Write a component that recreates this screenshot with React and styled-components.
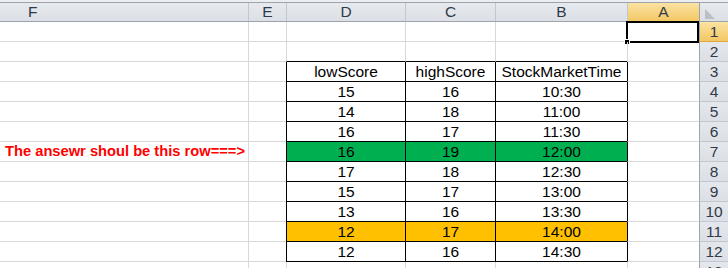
import styled, { createGlobalStyle } from "styled-components"

const GlobalStyle = createGlobalStyle`
    html, body {
        margin:0;
        padding:0;
        background:#FFFFFF;
    }
    body{
        font-family:"Liberation Sans", Arial, sans-serif;
    }
`

const COLS = "248px 38px 119px 90px 132px 72px 29px"
const GRID = "#D9D9D9"
const INK = "#000000"

const letras = ['F', 'E', 'D', 'C', 'B', 'A']

const dados = [
    { linha: 3, valores: ['lowScore', 'highScore', 'StockMarketTime'] },
    { linha: 4, valores: ['15', '16', '10:30'] },
    { linha: 5, valores: ['14', '18', '11:00'] },
    { linha: 6, valores: ['16', '17', '11:30'] },
    { linha: 7, valores: ['16', '19', '12:00'], fill: '#00B050', nota: 'The ansewr shoul be this row===>' },
    { linha: 8, valores: ['17', '18', '12:30'] },
    { linha: 9, valores: ['15', '17', '13:00'] },
    { linha: 10, valores: ['13', '16', '13:30'] },
    { linha: 11, valores: ['12', '17', '14:00'], fill: '#FFC000' },
    { linha: 12, valores: ['12', '16', '14:30'] },
]

export default function App() {
    const linhas = []
    for (let n = 1; n <= 13; n++) {
        const d = dados.find(e => e.linha === n)
        const naTabela = !!d
        const acimaTabela = n === 2
        linhas.push(
            <Row key={n}>
                <Cell $first $under={GRID} $align="flex-end">
                    {d && d.nota ? <Note>{d.nota}</Note> : null}
                </Cell>
                <Cell $edge={GRID} $under={GRID} />
                {[0, 1, 2].map(i => (
                    <Cell key={i}
                        $edge={naTabela ? INK : GRID}
                        $under={naTabela || acimaTabela ? INK : GRID}
                        $fill={d && d.fill}>
                        {d ? d.valores[i] : null}
                    </Cell>
                ))}
                <Cell $edge={naTabela ? INK : GRID} $under={GRID}>
                    {n === 1 ? <Selection><Handle /></Selection> : null}
                </Cell>
                <RowHead $active={n === 1}>{n}</RowHead>
            </Row>
        )
    }

    return (
        <Sheet>
            <GlobalStyle />
            <TopStrip />
            <HeadRow>
                {letras.map(l => (
                    <ColHead key={l} $active={l === 'A'} $first={l === 'F'}>
                        {l}
                    </ColHead>
                ))}
                <Corner>
                    <svg width="10" height="10" viewBox="0 0 10 10">
                        <path d="M0 0 L10 10 L0 10 Z" fill="#B9BFC7" />
                    </svg>
                </Corner>
            </HeadRow>
            {linhas}
        </Sheet>
    )
}

const Sheet = styled.div`
    width:728px;
    height:268px;
    overflow:hidden;
    background:#FFFFFF;
    color:#000000;
`
const TopStrip = styled.div`
    height:2px;
    background:#ECEEF1;
`
const HeadRow = styled.div`
    display:grid;
    grid-template-columns:${COLS};
    height:20px;
    box-sizing:border-box;
    border-top:1px solid #9DA3AA;
    border-bottom:1px solid #9DA3AA;
`
const ColHead = styled.div`
    display:flex;
    align-items:center;
    justify-content:${props => props.$first ? 'flex-start' : 'center'};
    padding-left:${props => props.$first ? '28px' : '0'};
    border-left:${props => props.$first ? 'none' : '1px solid #C2C8D0'};
    background:${props => props.$active
        ? 'linear-gradient(#FBE3A2, #F3C764)'
        : 'linear-gradient(#E6E9EE, #DCE0E6)'};
    color:#2F3B48;
    font-size:15.5px;
    line-height:18px;
`
const Corner = styled.div`
    display:flex;
    align-items:flex-start;
    padding:6px 0 0 5px;
    box-sizing:border-box;
    border-left:1px solid #9DA3AA;
    background:linear-gradient(#E6E9EE, #DCE0E6);
`
const Row = styled.div`
    display:grid;
    grid-template-columns:${COLS};
    height:20px;
`
const Cell = styled.div`
    position:relative;
    box-sizing:border-box;
    display:flex;
    align-items:center;
    justify-content:${props => props.$align || 'center'};
    border-left:${props => props.$first ? 'none' : `1px solid ${props.$edge}`};
    border-bottom:1px solid ${props => props.$under};
    background:${props => props.$fill || 'transparent'};
    font-size:15.5px;
    line-height:19px;
    white-space:nowrap;
`
const Note = styled.span`
    padding-right:3px;
    color:#FF0000;
    font-weight:bold;
    font-size:14.7px;
`
const RowHead = styled.div`
    box-sizing:border-box;
    display:flex;
    align-items:center;
    justify-content:center;
    border-left:1px solid #9DA3AA;
    border-bottom:1px solid ${props => props.$active ? '#E0A93A' : '#C2C8D0'};
    background:${props => props.$active
        ? 'linear-gradient(#FBE3A2, #F3C764)'
        : 'linear-gradient(#E4E7EC, #DCE0E6)'};
    color:#2F3B48;
    font-size:15.5px;
    line-height:19px;
`
const Selection = styled.div`
    position:absolute;
    top:-1px;
    left:-2px;
    right:0;
    bottom:-2px;
    border:2px solid #000000;
`
const Handle = styled.div`
    position:absolute;
    left:-4px;
    bottom:-4px;
    width:6px;
    height:6px;
    background:#000000;
    border:1px solid #FFFFFF;
    box-sizing:border-box;
`
